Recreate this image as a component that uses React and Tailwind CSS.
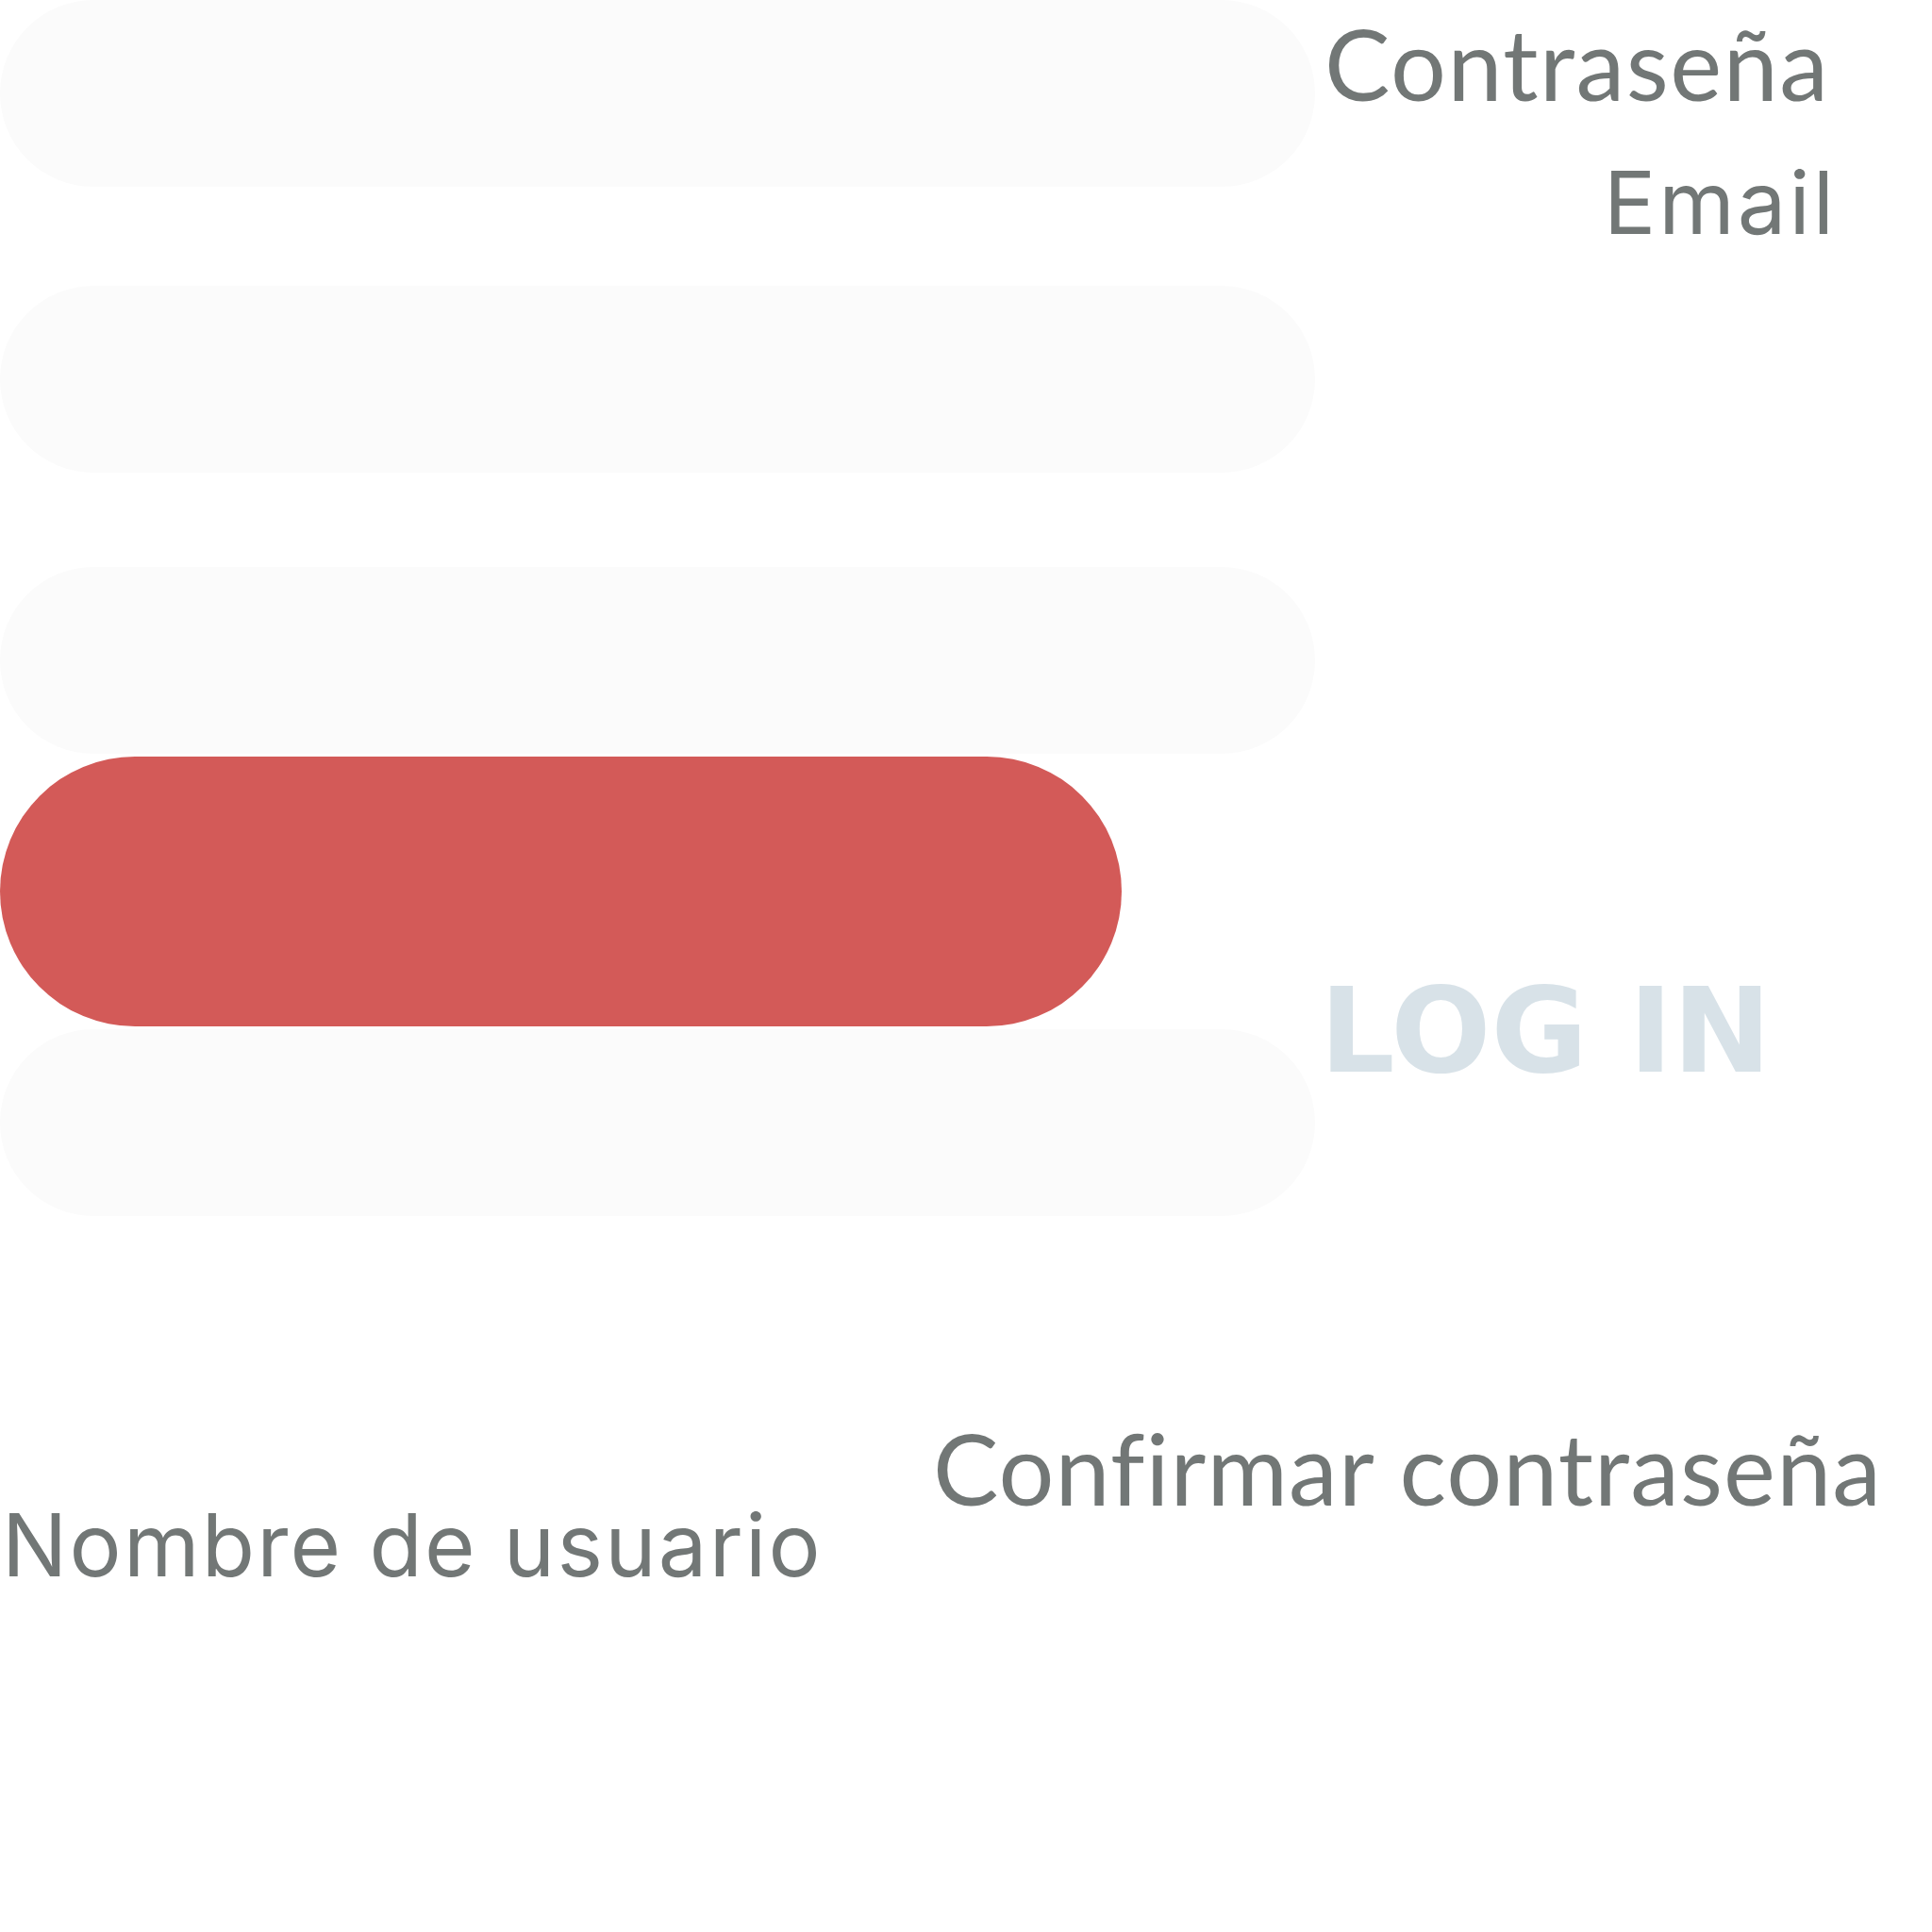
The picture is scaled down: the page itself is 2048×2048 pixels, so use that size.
export default function App() {
  const pill = 'h-[198px] w-[1394px] rounded-full bg-[#fbfbfb]';
  const label = 'text-[#727776] leading-none whitespace-nowrap [font-variant-ligatures:none]';

  return (
    <div className="w-[2048px] h-[2048px] bg-white overflow-hidden">
      {/* form fields + labels */}
      <div className="flex">
        <div className="flex flex-col w-[1394px] shrink-0">
          <div className={pill} />
          <div className={`${pill} mt-[105px]`} />
          <div className={`${pill} mt-[100px]`} />
          <div className="h-[286px] w-[1189px] rounded-full bg-[#d35a58] mt-[3px]" />
          <div className={`${pill} mt-[3px]`} />
        </div>

        <div className="flex flex-col flex-1">
          <div className={`${label} ml-[10px] mt-[15px] text-[104px] tracking-[1.5px] font-['Lato',sans-serif]`}>
            Contraseña
          </div>
          <div className={`${label} text-right mr-[101px] mt-[50px] text-[92px] tracking-[3px] font-['Inter',sans-serif]`}>
            Email
          </div>
          <button className="self-start ml-[5px] mt-[769px] text-[125px] leading-none font-bold text-[#d8e2e8] font-['DejaVu_Sans',sans-serif]">
            LOG IN
          </button>
        </div>
      </div>

      <div className={`${label} ml-[989px] mt-[215px] text-[104px] tracking-[1.1px] font-['Lato',sans-serif]`}>
        Confirmar contraseña
      </div>
      <div className={`${label} ml-[2px] -mt-[16px] text-[92px] tracking-[2.2px] font-['Inter',sans-serif]`}>
        Nombre de usuario
      </div>
    </div>
  );
}
